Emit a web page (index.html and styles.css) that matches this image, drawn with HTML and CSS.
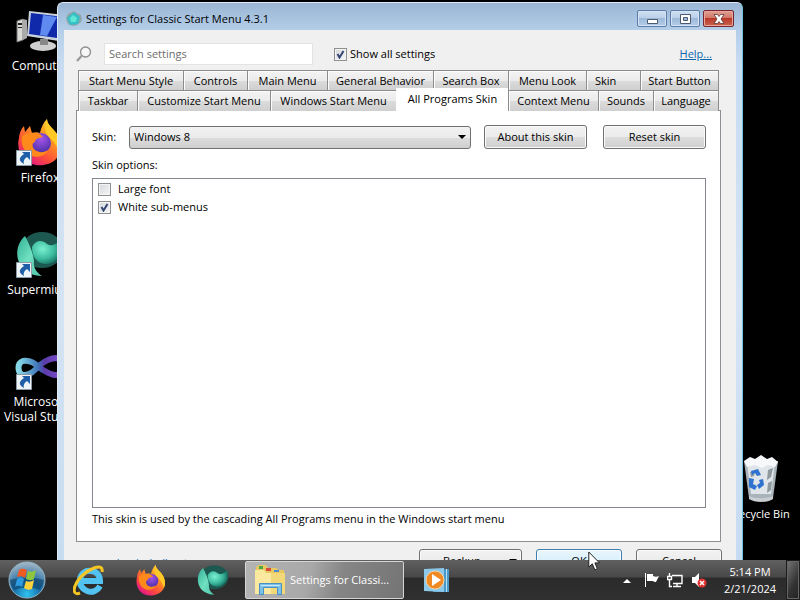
FILE: index.html
```
<!DOCTYPE html>
<html lang="en">
<head>
  <meta charset="UTF-8">
  <title>Settings for Classic Start Menu 4.3.1</title>
  <link rel="stylesheet" href="styles.css">
</head>
<body>

<!-- shapes used more than once -->
<svg class="defs" aria-hidden="true">
  <defs>
    <linearGradient id="fire" x1="1" y1="0" x2="0.3" y2="1">
      <stop offset="0" stop-color="#fff04a"/>
      <stop offset="0.4" stop-color="#ff9a1f"/>
      <stop offset="0.75" stop-color="#fb4a3c"/>
      <stop offset="1" stop-color="#e3188a"/>
    </linearGradient>
    <radialGradient id="globe" cx="0.5" cy="0.3" r="0.7">
      <stop offset="0" stop-color="#a455e8"/>
      <stop offset="1" stop-color="#4b2fa8"/>
    </radialGradient>
    <linearGradient id="mint" x1="0" y1="0" x2="1" y2="1">
      <stop offset="0" stop-color="#2fae94"/>
      <stop offset="0.5" stop-color="#6fe0c0"/>
      <stop offset="1" stop-color="#4fc4a8"/>
    </linearGradient>
    <radialGradient id="pearl" cx="0.35" cy="0.4" r="0.65">
      <stop offset="0" stop-color="#7af0d0"/>
      <stop offset="0.6" stop-color="#3dbb9f"/>
      <stop offset="1" stop-color="#167465"/>
    </radialGradient>
    <linearGradient id="loop" x1="0" y1="0" x2="1" y2="0">
      <stop offset="0" stop-color="#86d8e6"/>
      <stop offset="0.45" stop-color="#3f74b8"/>
      <stop offset="0.6" stop-color="#5b3aa8"/>
      <stop offset="1" stop-color="#7d4fd0"/>
    </linearGradient>
  </defs>
  <symbol id="firefox" viewBox="0 0 48 48">
    <path fill="url(#fire)" d="M3 20c0-4 2-9 5-12l1 6 5-6 2 7c3-1 6-1 8 0 1-6 4-11 7-14 0 6 6 9 10 15 6 9 5 19-1 25C33 49 15 50 7 40 3 35 1 27 3 20z"/>
    <circle cx="25" cy="25" r="10" fill="url(#globe)"/>
    <path fill="#ff8a1c" d="M6 18c6-4 12-4 18-2l3 3c-5 1-8 2-8 5-3 1-3 4-1 7 4 4 10 4 14 1-3 8-16 9-22 2-4-5-5-11-4-16z"/>
    <path fill="#ffc928" d="M31 1c0 6 6 9 10 15 5 8 5 15 2 20-1-9-7-14-11-18-3-4-4-10-1-17z"/>
  </symbol>
  <symbol id="supermium" viewBox="0 0 48 48">
    <ellipse cx="26" cy="20" rx="21" ry="18" fill="#1d5850"/>
    <path fill="url(#mint)" d="M9 6C0 14-1 27 5 36c4 6 12 10 21 10-6-4-9-9-8-15-1-9-5-17-9-25z"/>
    <path fill="url(#pearl)" d="M16 17c4-8 11-7 15-3 5 3 10 0 14-5 4 13-4 25-15 25-9 0-14-7-14-17z"/>
  </symbol>
  <symbol id="shortcut" viewBox="0 0 16 16">
    <path fill="#eef3f8" stroke="#8c9aa8" d="M.5.5h15v15H.5z"/>
    <path fill="#1f5fa8" d="M6 2h8v8l-3-3c-3 2-4 4-3 7-6-3-5-7 0-10z"/>
  </symbol>
</svg>

<main class="desktop">

  <div class="icons">
    <div class="icon">
      <svg viewBox="0 0 48 48">
        <path fill="#d9d9d5" stroke="#777" d="M1 15l6-2v21l-6 2z"/>
        <path fill="#aaa" d="M7 13l4 1v18l-4 2z"/>
        <path fill="#222" d="M2 17h4v2H2zm0 4h4v1H2z"/>
        <ellipse cx="27" cy="40" rx="13" ry="5" fill="#cfcfcf"/>
        <path fill="#888" d="M24 33h8v6h-8z"/>
        <path fill="#c9d2dc" d="M13 5l36 4v27l-38-6z"/>
        <path fill="#1029ab" d="M15 7l33 4v22l-35-5z"/>
        <path fill="#5f8bf0" d="M27 9l14 2-10 19-7-1z"/>
      </svg>
      <span>Computer</span>
    </div>
    <div class="icon">
      <svg viewBox="0 0 48 48"><use href="#firefox"/><use href="#shortcut" x="0" y="32" width="16" height="16"/></svg>
      <span>Firefox</span>
    </div>
    <div class="icon">
      <svg viewBox="0 0 48 48"><use href="#supermium"/><use href="#shortcut" x="0" y="32" width="16" height="16"/></svg>
      <span>Supermium</span>
    </div>
    <div class="icon">
      <svg viewBox="0 0 48 48">
        <path fill="none" stroke="url(#loop)" stroke-width="6" d="M24 26c-6-6-12-8-17-7-6 2-6 12 0 14 7 1 12-5 17-10 5-4 10-7 16-7 8 1 8 17 0 17-6 0-11-4-16-7z"/>
        <use href="#shortcut" x="0" y="32" width="16" height="16"/>
      </svg>
      <span>Microsoft<br>Visual Studio</span>
    </div>
  </div>

  <div class="icon bin">
    <svg viewBox="0 0 48 48">
      <path fill="#a9b3ba" d="M7 7h34l-5 37c-5 4-19 4-24 0z"/>
      <path fill="#dfe5e8" d="M10 9h28l-4 31H14z"/>
      <path fill="#f6f8f9" d="M7 7l6-4 5 2 6-4 6 4 5-2 6 5-3 5-7-2-6 3-7-3-8 2z"/>
      <path fill="#8d989f" d="M31 16l5-2-2 9-4 3zM31 29l4-2-1 9-4 3zM13 18l5-1-1 5-3 1z"/>
      <path fill="#2f72cf" d="M14 17l7-2 3 6-4 1-2-3-3 2zM12 24l5 1-1 5 4 2-2 4-6-3zM22 26l4-1 1 6-5 4-2-4 3-2z"/>
      <path fill="#c8ced2" d="M12 42c5 3 19 3 24 0v3c-6 4-18 4-24 0z"/>
    </svg>
    <span>Recycle Bin</span>
  </div>

  <section class="window">
    <header class="titlebar">
      <svg class="app-icon" viewBox="0 0 16 16">
        <path fill="#8fa6a8" d="M8 0l3 2 4 2 1 4-1 3-4 3-3 1-5-1-2-3-1-4 2-4z"/>
        <path fill="#36c0c8" d="M8 1l6 5-2 7-8 1-3-7z"/>
        <path fill="#5fe6d4" d="M7 4l4 3-1 4H5L4 7z"/>
      </svg>
      <h1>Settings for Classic Start Menu 4.3.1</h1>
      <div class="caption-buttons">
        <button type="button" aria-label="Minimize">
          <svg viewBox="0 0 14 12"><path fill="#fff" stroke="#4c5a70" d="M2.500 6.500h10v4h-10z"/></svg>
        </button>
        <button type="button" aria-label="Maximize">
          <svg viewBox="0 0 14 12"><path fill="#fff" stroke="#4c5a70" fill-rule="evenodd" d="M2.500 1.500h10v9h-10zM5.500 4.500v3h4v-3z"/></svg>
        </button>
        <button type="button" class="close" aria-label="Close">
          <svg viewBox="0 0 14 12"><path fill="#fff" stroke="#5a3a3a" stroke-width=".8" d="M2 1.500h3.500L7 3.500l1.500-2H12L9 6l3 4.500H8.500L7 8.500l-1.500 2H2L5 6z"/></svg>
        </button>
      </div>
    </header>

    <div class="client">
      <div class="search-row">
        <svg class="glass" viewBox="0 0 16 16">
          <circle cx="9.500" cy="6" r="5" fill="#f7f7f7" stroke="#8e8e8e" stroke-width="1.300"/>
          <path stroke="#999" stroke-width="2.200" d="M5.500 10L1 15"/>
        </svg>
        <input class="search" type="text" placeholder="Search settings" aria-label="Search settings">
        <label class="check"><input type="checkbox" checked>Show all settings</label>
        <a class="help" href="#">Help...</a>
      </div>

      <nav class="tabs">
        <div class="tab-row first-row">
          <button type="button">Start Menu Style</button>
          <button type="button">Controls</button>
          <button type="button">Main Menu</button>
          <button type="button">General Behavior</button>
          <button type="button">Search Box</button>
          <button type="button">Menu Look</button>
          <button type="button" class="start">Skin</button>
          <button type="button">Start Button</button>
        </div>
        <div class="tab-row second-row">
          <button type="button">Taskbar</button>
          <button type="button">Customize Start Menu</button>
          <button type="button">Windows Start Menu</button>
          <button type="button" class="active">All Programs Skin</button>
          <button type="button">Context Menu</button>
          <button type="button">Sounds</button>
          <button type="button">Language</button>
        </div>
      </nav>

      <div class="panel">
        <div class="skin-row">
          <label for="skin">Skin:</label>
          <select id="skin">
            <option>Windows 8</option>
          </select>
          <button type="button" class="button">About this skin</button>
          <button type="button" class="button">Reset skin</button>
        </div>
        <div class="caption">Skin options:</div>
        <div class="options">
          <label class="check"><input type="checkbox">Large font</label>
          <label class="check"><input type="checkbox" checked>White sub-menus</label>
        </div>
        <div class="note">This skin is used by the cascading All Programs menu in the Windows start menu</div>
      </div>

      <footer class="footer">
        <a href="#">www.classicshell.net</a>
        <button type="button" class="button backup">Backup<i></i></button>
        <button type="button" class="button ok">OK</button>
        <button type="button" class="button">Cancel</button>
      </footer>
    </div>
  </section>

  <footer class="taskbar">
    <button type="button" class="orb" aria-label="Start">
      <svg viewBox="0 0 40 40">
        <defs>
          <radialGradient id="orb" cx="0.5" cy="0.9" r="0.9">
            <stop offset="0" stop-color="#2fc4f0"/>
            <stop offset="0.45" stop-color="#1668a4"/>
            <stop offset="1" stop-color="#a9bac6"/>
          </radialGradient>
        </defs>
        <circle cx="20" cy="20" r="18" fill="url(#orb)" stroke="#8fb4c8"/>
        <path fill="#0e3f66" d="M3 20c8-3 26-3 34 0-1 5-3 8-5 10-7-3-18-3-24 0-3-3-5-6-5-10z" opacity=".6"/>
        <path fill="#ee5a24" d="M12 10c3-2 5-1 8 0l-2 8c-3-2-5-2-8-1z"/>
        <path fill="#8cc63f" d="M21 11c3 1 5 1 8-1l-2 9c-3 2-5 1-8 0z"/>
        <path fill="#2d9be0" d="M10 19c3-2 5-1 7 0l-2 8c-3-2-5-1-7 0z"/>
        <path fill="#ffd23c" d="M19 21c3 1 5 1 8-1l-2 9c-3 1-5 1-8-1z"/>
      </svg>
    </button>
    <button type="button" class="pin" aria-label="Internet Explorer">
      <svg viewBox="0 0 32 32">
        <path fill="none" stroke="#52c3f0" stroke-width="6" d="M27 22c-3 5-8 7-13 5-5-2-8-7-7-12 1-6 6-9 11-8 5 0 9 4 9 10H9"/>
        <path fill="none" stroke="#f5c623" stroke-width="3" d="M29 8c1-5-2-6-8-4C13 7 5 14 2 22c-2 6 0 9 5 7"/>
      </svg>
    </button>
    <button type="button" class="pin" aria-label="Firefox"><svg><use href="#firefox"/></svg></button>
    <button type="button" class="pin" aria-label="Supermium"><svg><use href="#supermium"/></svg></button>
    <button type="button" class="task" title="Settings for Classic Start Menu 4.3.1">
      <svg viewBox="0 0 32 32">
        <path fill="#e8c860" d="M2 3l3-2h7l2 3h8l3 2h5v24H2z"/>
        <path fill="#4aa84a" d="M5 2h4v3H5z"/>
        <path fill="#d84a3a" d="M12 4h5v3h-5z"/>
        <path fill="#4a8fd0" d="M20 6h5v2h-5z"/>
        <path fill="#fbe9a0" d="M1 6h9l2 3h19v21H1z"/>
        <path fill="#f3d878" d="M17 9h14v21H17z"/>
        <path fill="#7ac0e8" stroke="#4a90c0" d="M5.500 19.500h22v11h-4v-7h-14v7h-4z"/>
        <path fill="#c4e6f8" d="M7 21h19v1H7z"/>
      </svg>
      <span>Settings for Classi...</span>
    </button>
    <button type="button" class="pin media" aria-label="Windows Media Player">
      <svg viewBox="0 0 28 28">
        <path fill="#4a98c8" d="M10 4l16-1v23H10z"/>
        <path fill="#b8e0f4" d="M23 3h1v23h-1z"/>
        <path fill="#8cc8ea" d="M1 3l20-1v24L1 25z"/>
        <circle cx="12" cy="14" r="9" fill="#f08a24" stroke="#f8d4a4"/>
        <path fill="#fff" d="M9 8l9 6-9 6z"/>
      </svg>
    </button>
    <div class="tray">
      <svg viewBox="0 0 16 16"><path fill="#fff" d="M4 11l4-4 4 4z"/></svg>
      <svg viewBox="0 0 16 16">
        <path fill="#fff" d="M2 1h1v14H2zM4 2h6v7H4zM10 4c2 1 4 1 6 0-1 2-2 4-3 6-1 0-2 0-3-1z"/>
      </svg>
      <svg viewBox="0 0 16 16">
        <path fill="none" stroke="#fff" stroke-width="1.400" d="M5 3.500h10v8H6M10 12v2M6 14.500h8M2.500 1v3M.5 4.500h4v3h-4zM2.500 8v6.500H5"/>
      </svg>
      <svg viewBox="0 0 16 16">
        <path fill="#fff" d="M1 5h3l4-4v14l-4-4H1z"/>
        <circle cx="11" cy="11" r="4.500" fill="#e03030"/>
        <path stroke="#fff" stroke-width="1.500" d="M9 9l4 4M13 9l-4 4"/>
      </svg>
    </div>
    <div class="clock">5:14 PM<br>2/21/2024</div>
    <button type="button" class="show-desktop" aria-label="Show desktop"></button>
  </footer>

  <svg class="cursor" viewBox="0 0 12 20">
    <path fill="#fff" stroke="#222" d="M.8 1v15l3.500-3.200 2.500 6 2.600-1.100-2.500-5.800h4.600z"/>
  </svg>
</main>

</body>
</html>
```
FILE: styles.css
```
* {
  box-sizing: border-box;
}
body {
  margin: 0;
  background: #000;
  color: #000;
  font: 11px/16px "Open Sans", "Noto Sans", sans-serif;
}
button, input, select {
  font: inherit;
  color: inherit;
}
svg {
  display: block;
}
.defs {
  position: absolute;
  width: 0;
  height: 0;
}
.desktop {
  position: relative;
  height: 100vh;
  overflow: hidden;
}

/* desktop icons */
.icons {
  display: grid;
  grid-auto-rows: 112px;
  width: 80px;
  padding-top: 6px;
}
.icon {
  display: flex;
  flex-direction: column;
  align-items: center;
  color: #fff;
  text-align: center;
  white-space: nowrap;
  line-height: 15px;
}
.icons .icon {
  font-size: 12px;
}
.icon svg {
  width: 48px;
  height: 48px;
  margin-bottom: 4px;
}
.icons svg {
  overflow: visible;
}
.bin {
  position: absolute;
  right: 1px;
  bottom: 79px;
  width: 76px;
}

/* window */
.window {
  position: absolute;
  top: 2px;
  left: 57px;
  right: 57px;
  padding: 0 6px 7px;
  border: 1px solid #dfeaf5;
  border-right-color: #6cc4d8;
  border-radius: 6px 6px 0 0;
  background: linear-gradient(#9ab6d4, #b5cfea 28px, #c7dcf1 60px, #d4e4f4 300px, #c4dbf0);
}
.titlebar {
  display: flex;
  align-items: center;
  height: 27px;
  padding: 4px 2px 0;
}
.app-icon {
  width: 16px;
  height: 16px;
  margin-right: 4px;
}
h1 {
  flex: 1;
  margin: 0;
  font-size: 11px;
  font-weight: normal;
}
.caption-buttons {
  display: flex;
  gap: 3px;
}
.caption-buttons button {
  display: flex;
  align-items: center;
  justify-content: center;
  width: 30px;
  height: 17px;
  padding: 0;
  border: 1px solid #5c7ba6;
  border-radius: 2px;
  background: linear-gradient(#cfdff0, #b9cfe8 50%, #9db9d8 50%, #b4cdea);
  box-shadow: inset 0 0 0 1px #d5e4f4;
}
.caption-buttons svg {
  width: 14px;
  height: 12px;
}
.caption-buttons .close {
  width: 31px;
  border-color: #7a2430;
  background: linear-gradient(#e2a093, #cf7464 50%, #b8382a 50%, #cc6450);
  box-shadow: inset 0 0 0 1px #e6a79c;
}

.client {
  padding: 13px 15px 12px 12px;
  background: #f0f0f0;
}
.search-row {
  display: flex;
  align-items: center;
  height: 22px;
  margin-bottom: 5px;
}
.glass {
  width: 16px;
  height: 16px;
  margin-right: 12px;
}
.search {
  width: 209px;
  height: 22px;
  margin-right: 21px;
  padding: 0 4px 2px;
  border: 1px solid #e3e3e3;
  background: #fff;
}
.search::placeholder {
  color: #6d6d6d;
  opacity: 1;
}
.check {
  display: flex;
  align-items: center;
}
.check input {
  appearance: none;
  width: 13px;
  height: 13px;
  margin: 0 3px 0 0;
  border: 1px solid #8e8f8f;
  background: linear-gradient(135deg, #d5d8dc, #f6f6f6);
  box-shadow: inset 0 0 0 1px #f4f4f4;
}
.check input:checked {
  background: url("data:image/svg+xml,%3Csvg xmlns='http://www.w3.org/2000/svg' viewBox='0 0 11 11'%3E%3Cpath fill='none' stroke='%23354674' stroke-width='2' d='M2.500 5l2 3.500L8.500 2'/%3E%3C/svg%3E"), linear-gradient(135deg, #d5d8dc, #f6f6f6);
}
a {
  color: #0f66ad;
}
.help {
  margin-left: auto;
  margin-right: 9px;
}

/* tabs */
.tabs {
  margin: 0 2px;
}
.tab-row {
  display: grid;
  height: 20px;
}
.first-row {
  grid-template-columns: 105fr 64fr 80fr 106fr 75fr 78fr 54fr 79fr;
}
.second-row {
  grid-template-columns: 59fr 133fr 126fr 112fr 90fr 55fr 66fr;
}
.tab-row button {
  min-width: 0;
  padding: 0;
  border: 1px solid #8c8c8c;
  border-right-width: 0;
  border-bottom-width: 0;
  background: linear-gradient(#f3f3f3, #ebebeb 50%, #dcdcdc 50%, #cfcfcf);
  box-shadow: inset 1px 1px 0 #fcfcfc;
  white-space: nowrap;
}
.tab-row button:last-child {
  border-right-width: 1px;
}
.tab-row .start {
  padding-left: 8px;
  text-align: left;
}
.tab-row .active {
  height: 23px;
  margin-top: -2px;
  padding-bottom: 2px;
  border-color: #fff;
  background: #fff;
  z-index: 1;
}
.panel {
  padding: 14px 14px 14px 15px;
  border: 1px solid #8c8e94;
  background: #fff;
}
.skin-row {
  display: flex;
  align-items: center;
}
.skin-row label {
  width: 37px;
}
select {
  appearance: none;
  flex: 1;
  height: 23px;
  margin-right: 13px;
  padding: 0 4px;
  border: 1px solid #707070;
  border-radius: 3px;
  background: url("data:image/svg+xml,%3Csvg xmlns='http://www.w3.org/2000/svg' viewBox='0 0 8 4'%3E%3Cpath d='M0 0h8L4 4z'/%3E%3C/svg%3E") right 4px center / 8px 4px no-repeat, linear-gradient(#f2f2f2, #ebebeb 50%, #dddddd 50%, #cfcfcf);
}
.button {
  width: 103px;
  height: 24px;
  padding: 0;
  border: 1px solid #707070;
  border-radius: 3px;
  background: linear-gradient(#f2f2f2, #ebebeb 50%, #dddddd 50%, #cfcfcf);
  box-shadow: inset 0 0 0 1px #fbfbfb;
}
.skin-row .button + .button {
  margin-left: 16px;
}
.caption {
  margin: 8px 0 5px;
}
.options {
  height: 330px;
  padding: 1px 5px;
  border: 1px solid #828790;
}
.options .check {
  height: 18px;
}
.options input {
  margin-right: 7px;
}
.note {
  margin-top: 3px;
}
.footer {
  display: flex;
  margin-top: 7px;
}
.footer a {
  margin: 6px auto 0 7px;
}
.footer .button {
  width: 86px;
  margin-right: -1px;
  margin-left: 15px;
}
.footer .backup {
  display: flex;
  align-items: center;
  width: 103px;
  padding: 0 4px 0 23px;
}
.backup i {
  margin-left: auto;
  border: 4px solid transparent;
  border-top-color: #000;
  border-bottom-width: 0;
}
.footer .ok {
  border-color: #3c7fb1;
  background: linear-gradient(#eaf6fd, #d9f0fc 50%, #bee6fd 50%, #a7d9f5);
}

/* taskbar */
.taskbar {
  position: absolute;
  left: 0;
  right: 0;
  bottom: 0;
  display: flex;
  align-items: center;
  height: 40px;
  background: linear-gradient(#606060, #484848 17px, #2b2b2b 18px, #303030);
  color: #fff;
}
.taskbar button {
  padding: 0;
  border: 0;
  background: none;
}
.orb {
  width: 54px;
}
.orb svg {
  width: 40px;
  height: 40px;
  margin: 0 auto;
}
.pin {
  width: 62px;
}
.pin svg {
  width: 32px;
  height: 32px;
  margin: 0 auto;
}
.orb + .pin {
  margin-left: 4px;
}
.taskbar .task {
  display: flex;
  align-items: center;
  width: 159px;
  height: 38px;
  margin: 0 2px 0 1px;
  padding: 0 8px;
  border: 1px solid #d5d5d5;
  border-radius: 2px;
  background: linear-gradient(105deg, #b4b4b4, #a8a8a8 40%, #868686 60%, #747474);
}
.task svg {
  flex: none;
  width: 32px;
  height: 32px;
  margin-right: 4px;
}
.task span {
  white-space: nowrap;
}
.media svg {
  width: 28px;
  height: 28px;
}
.tray {
  display: flex;
  gap: 8px;
  margin: 0 7px 0 auto;
}
.tray svg {
  width: 16px;
  height: 16px;
}
.clock {
  width: 72px;
  line-height: 17px;
  text-align: center;
}
.taskbar .show-desktop {
  width: 14px;
  height: 40px;
  border: 1px solid #1c1c1c;
  background: linear-gradient(120deg, #777, #333 60%, #222);
  box-shadow: inset 0 0 0 1px #666;
}

/* pointer */
.cursor {
  position: absolute;
  left: 588px;
  top: 551px;
  width: 12px;
  height: 20px;
}
```
